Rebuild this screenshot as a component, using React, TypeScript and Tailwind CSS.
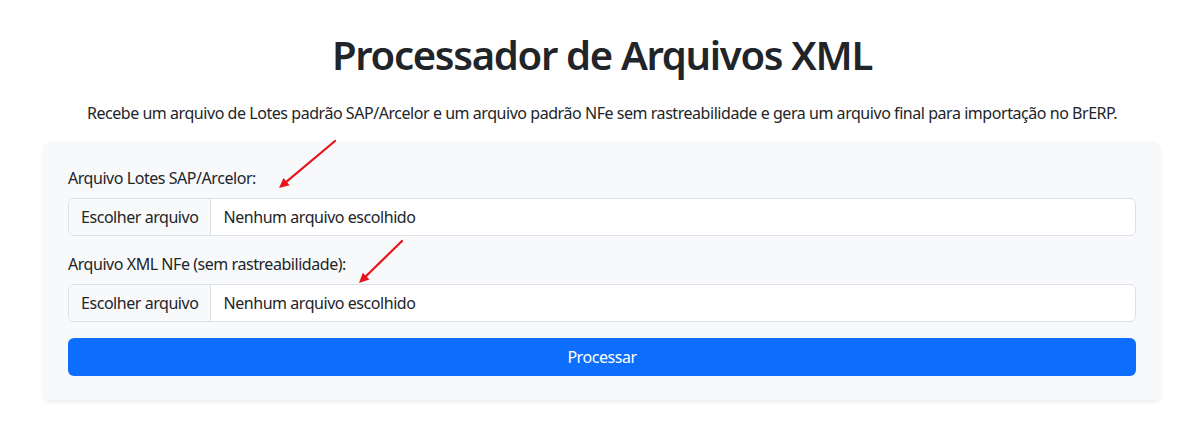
import React from 'react';

// Red annotation arrow drawn over the form
function Arrow({ x1, y1, x2, y2 }: { x1: number; y1: number; x2: number; y2: number }) {
  const ang = Math.atan2(y2 - y1, x2 - x1);
  const len = 11;
  const spread = 0.45;
  const ax = x2 - len * Math.cos(ang - spread);
  const ay = y2 - len * Math.sin(ang - spread);
  const bx = x2 - len * Math.cos(ang + spread);
  const by = y2 - len * Math.sin(ang + spread);
  return (
    <g>
      <line x1={x1} y1={y1} x2={x2 - 4 * Math.cos(ang)} y2={y2 - 4 * Math.sin(ang)} stroke="#e8141b" strokeWidth={2.2} strokeLinecap="round" />
      <polygon points={`${x2},${y2} ${ax},${ay} ${bx},${by}`} fill="#e8141b" />
    </g>
  );
}

function FileField({ label }: { label: string }) {
  return (
    <div className="mb-4">
      <label className="block mb-2 leading-6">{label}</label>
      <div className="flex h-[38px] rounded-md border border-[#dee2e6] bg-white overflow-hidden">
        <div className="flex items-center px-3 bg-[#f8f9fa] border-r border-[#dee2e6] text-[#212529]">Escolher arquivo</div>
        <div className="flex items-center px-3 text-[#212529]">Nenhum arquivo escolhido</div>
      </div>
    </div>
  );
}

export default function App() {
  return (
    <div className="relative min-h-[435px] bg-white text-[#212529] text-base tracking-[-0.45px]" style={{ fontFamily: '"Noto Sans", "Segoe UI", sans-serif' }}>
      <div className="w-[1116px] ml-[44px] pt-[31px]">
        <h1 className="text-center text-[40px] leading-[48px] font-semibold tracking-[-1.3px] mb-[22px]">Processador de Arquivos XML</h1>
        <p className="text-center leading-6 mb-[17px]">
          Recebe um arquivo de Lotes padrão SAP/Arcelor e um arquivo padrão NFe sem rastreabilidade e gera um arquivo final para importação no BrERP.
        </p>
        <div className="bg-[#f8f9fa] rounded-md shadow-[0_2px_4px_rgba(0,0,0,0.075)] p-6">
          <FileField label="Arquivo Lotes SAP/Arcelor:" />
          <FileField label="Arquivo XML NFe (sem rastreabilidade):" />
          <button className="w-full h-[38px] rounded-md bg-[#0d6efd] text-white">Processar</button>
        </div>
      </div>
      <svg className="absolute left-0 top-0 pointer-events-none" width={1195} height={435}>
        <Arrow x1={335} y1={141} x2={279} y2={188} />
        <Arrow x1={402} y1={241} x2={359} y2={283} />
      </svg>
    </div>
  );
}
